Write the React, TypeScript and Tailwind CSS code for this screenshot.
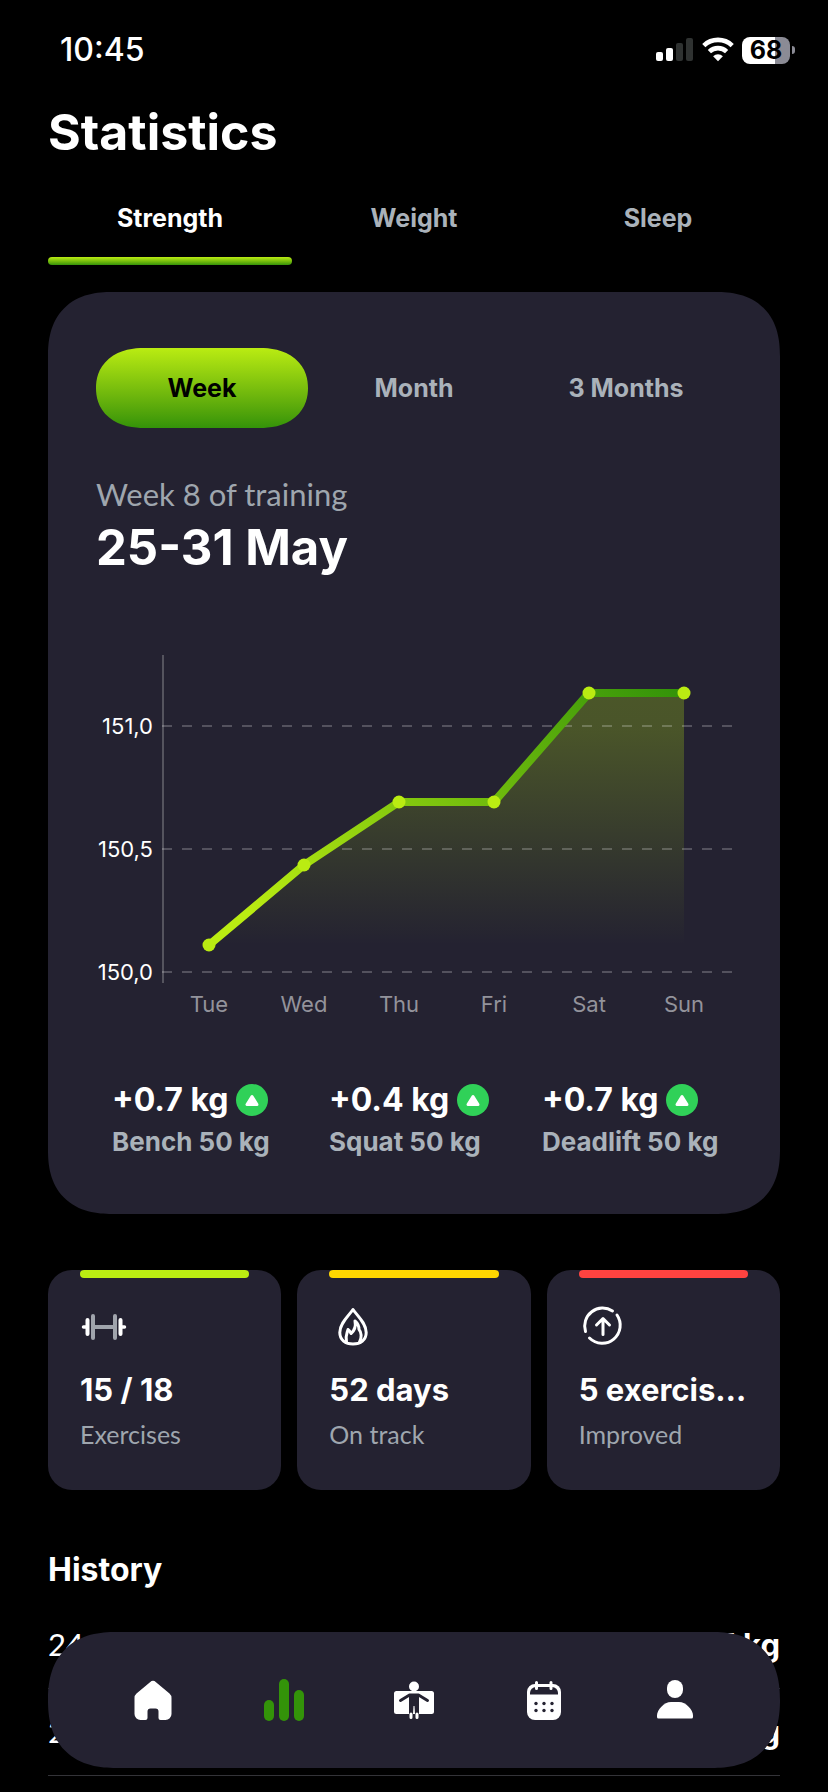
import React, { useState } from "react";

type Lift = { change: string; label: string };

const TABS = ["Strength", "Weight", "Sleep"];
const RANGES = ["Week", "Month", "3 Months"];

const LIFTS: Lift[] = [
  { change: "+0.7 kg", label: "Bench 50 kg" },
  { change: "+0.4 kg", label: "Squat 50 kg" },
  { change: "+0.7 kg", label: "Deadlift 50 kg" },
];

const HISTORY = [
  { date: "24 May", weight: "151 kg" },
  { date: "23 May", weight: "150 kg" },
];

const GRID = [
  { label: "151,0", y: 86 },
  { label: "150,5", y: 209 },
  { label: "150,0", y: 332 },
];

const POINTS = [
  { day: "Tue", x: 113, y: 305 },
  { day: "Wed", x: 208, y: 225 },
  { day: "Thu", x: 303, y: 162 },
  { day: "Fri", x: 398, y: 162 },
  { day: "Sat", x: 493, y: 53 },
  { day: "Sun", x: 588, y: 53 },
];

const StatusBar = () => (
  <div className="flex h-7 items-center justify-between pl-3">
    <span className="text-[32px] leading-7 font-medium">10:45</span>
    <div className="-mr-[15px] flex items-center gap-2">
      <svg width="38" height="28" viewBox="0 0 38 28" aria-hidden="true">
        <rect x="0" y="16" width="7" height="9" rx="2" fill="#fff" />
        <rect x="10" y="12" width="7" height="13" rx="2" fill="#fff" />
        <rect x="20" y="7" width="7" height="18" rx="2" fill="#2f3231" />
        <rect x="30" y="2" width="7" height="23" rx="2" fill="#2f3231" />
      </svg>
      <svg width="32" height="28" viewBox="0 0 32 28" aria-hidden="true">
        <g fill="none" stroke="#fff" strokeWidth="4.6">
          <path d="M1.8 9.6a20.5 20.5 0 0 1 28.4 0" />
          <path d="M7.4 15.6a12.5 12.5 0 0 1 17.2 0" />
        </g>
        <path d="M16 25.2l-4.9-5a7.2 7.2 0 0 1 9.8 0z" fill="#fff" />
      </svg>
      <div className="flex items-center gap-0.5">
        <div className="flex h-[27px] w-12 items-center justify-center rounded-lg bg-linear-to-r from-white from-68% to-[#8b8b95] to-68% text-[25px] leading-none font-bold text-black">
          68
        </div>
        <div className="h-2 w-[3px] rounded-r-full bg-[#8b8b95]" />
      </div>
    </div>
  </div>
);

const Chart = () => {
  const line = POINTS.map((p) => `${p.x},${p.y}`).join(" ");

  return (
    <svg
      viewBox="0 0 636 384"
      className="mt-16 w-full"
      fontSize="22"
      role="img"
      aria-label="Strength by day"
    >
      <defs>
        <linearGradient
          id="line"
          gradientUnits="userSpaceOnUse"
          x1="180"
          y1="305"
          x2="540"
          y2="0"
        >
          <stop offset="0" stopColor="#baec12" />
          <stop offset="1" stopColor="#339309" />
        </linearGradient>
        <linearGradient
          id="area"
          gradientUnits="userSpaceOnUse"
          x1="0"
          y1="53"
          x2="0"
          y2="305"
        >
          <stop offset="0" stopColor="#baec12" stopOpacity="0.26" />
          <stop offset="0.15" stopColor="#baec12" stopOpacity="0.25" />
          <stop offset="1" stopColor="#baec12" stopOpacity="0" />
        </linearGradient>
      </defs>
      <polygon points={`113,305 ${line} 588,305`} fill="url(#area)" />
      <path d="M67 15V343" stroke="#55545e" strokeWidth="2" />
      {GRID.map((g) => (
        <g key={g.label}>
          <path
            d={`M66 ${g.y}H636`}
            stroke="#fff"
            strokeOpacity="0.22"
            strokeWidth="2"
            strokeDasharray="10 10"
          />
          <text x="57" y={g.y + 8} textAnchor="end" fill="#fff">
            {g.label}
          </text>
        </g>
      ))}
      <polyline
        points={line}
        fill="none"
        stroke="url(#line)"
        strokeWidth="8"
        strokeLinejoin="round"
      />
      {POINTS.map((p) => (
        <g key={p.day}>
          <circle cx={p.x} cy={p.y} r="6.5" fill="#baec12" />
          <text x={p.x} y="372" textAnchor="middle" fill="#93939b">
            {p.day}
          </text>
        </g>
      ))}
    </svg>
  );
};

const StatCard = ({
  bar,
  icon,
  value,
  label,
}: {
  bar: string;
  icon: React.ReactNode;
  value: string;
  label: string;
}) => (
  <div className="min-w-0 rounded-3xl bg-[#242231] px-8 pb-10">
    <div className={`h-2 rounded-full ${bar}`} />
    <div className="mt-6 h-12 w-12">{icon}</div>
    <div className="mt-5 truncate text-[31px] leading-10 font-bold">
      {value}
    </div>
    <div className="mt-2 font-['Lato',sans-serif] text-[25px] leading-8 text-[#9fa6ae]">
      {label}
    </div>
  </div>
);

const DumbbellIcon = () => (
  <svg viewBox="0 0 48 48" strokeLinecap="round" fill="none">
    <path d="M14 25h20" stroke="#a0a4ac" strokeWidth="4" />
    <path d="M13 14v22M35 14v22" stroke="#a0a4ac" strokeWidth="4" />
    <path d="M7.5 18v14M40.5 18v14" stroke="#fff" strokeWidth="4" />
    <path d="M3.5 25H7M41 25h3.5" stroke="#fff" strokeWidth="3.5" />
  </svg>
);

const FlameIcon = () => (
  <svg
    viewBox="0 0 48 48"
    fill="none"
    stroke="#fff"
    strokeWidth="3"
    strokeLinejoin="round"
    strokeLinecap="round"
  >
    <path d="M24 7.5C20 13.5 10.8 21 10.8 30.5 10.8 38 16.5 42 24 42s13.2-4 13.2-11.5C37.2 21 28 13.500 24 7.500z" />
    <path d="M17.5 40c-1.5-6 .5-8.5 1.5-12.5 1.5 1 2.5 2.5 3 4 3.5-3 5-7.500 4-12.500 3.500 3 4 5.500 4 8.500 2.500 2.500 3 8.500.5 12.500" />
  </svg>
);

const ImprovedIcon = () => (
  <svg
    viewBox="0 0 48 48"
    fill="none"
    stroke="#fff"
    strokeWidth="3"
    strokeLinejoin="round"
    strokeLinecap="round"
  >
    <path d="M6.5 29.5A18 18 0 0 1 33.5 9" />
    <path d="M38 13A18 18 0 0 1 10.5 36" />
    <path d="M24 32.5V17M17.5 23l6.5-6.5 6.5 6.5" />
  </svg>
);

const HomeIcon = () => (
  <svg viewBox="0 0 48 48" className="h-12 w-12">
    <path
      d="M21 6.2a4.5 4.5 0 0 1 6 0L40.5 17.5a6 6 0 0 1 2 4.5V38a6 6 0 0 1-6 6h-5a2 2 0 0 1-2-2v-6.5a3 3 0 0 0-3-3h-5a3 3 0 0 0-3 3V42a2 2 0 0 1-2 2h-5a6 6 0 0 1-6-6V22a6 6 0 0 1 2-4.5z"
      fill="#fff"
    />
  </svg>
);

const BarsIcon = () => (
  <svg viewBox="0 0 48 48" className="h-12 w-12" fill="#339309">
    <rect x="4" y="24" width="10" height="21" rx="5" />
    <rect x="19" y="3" width="10" height="42" rx="5" />
    <rect x="34" y="14" width="10" height="31" rx="5" />
  </svg>
);

const BodyIcon = () => (
  <svg viewBox="0 0 48 48" className="h-12 w-12">
    <circle cx="24" cy="10.5" r="5" fill="#fff" />
    <rect x="4" y="15" width="40" height="23" rx="2.5" fill="#fff" />
    <path
      d="M10.5 24.5L19.5 19h9l9 5.5"
      fill="none"
      stroke="#242231"
      strokeWidth="3"
      strokeLinecap="round"
      strokeLinejoin="round"
    />
    <path d="M19 18h10v20H19z" fill="#242231" />
    <path
      d="M21 38v3.5M27 38v3.5"
      stroke="#fff"
      strokeWidth="3"
      strokeLinecap="round"
    />
    <path d="M23 38l.5-8h1l.5 8z" fill="#fff" />
  </svg>
);

const CalendarIcon = () => (
  <svg viewBox="0 0 48 48" className="h-12 w-12">
    <rect x="7" y="8" width="34" height="36" rx="8" fill="#fff" />
    <path
      d="M10 18.5V17a6 6 0 0 1 6-6h16a6 6 0 0 1 6 6v1.5z"
      fill="#242231"
    />
    <path
      d="M16.5 6.5v6M31 6.5v6"
      stroke="#fff"
      strokeWidth="3"
      strokeLinecap="round"
    />
    <g fill="#242231">
      <circle cx="16" cy="27.5" r="1.7" />
      <circle cx="24" cy="27.5" r="1.7" />
      <circle cx="32" cy="27.5" r="1.7" />
      <circle cx="16" cy="34.5" r="1.7" />
      <circle cx="24" cy="34.5" r="1.7" />
      <circle cx="32" cy="34.5" r="1.7" />
    </g>
  </svg>
);

const ProfileIcon = () => (
  <svg viewBox="0 0 48 48" className="h-12 w-12" fill="#fff">
    <rect x="16" y="4" width="16" height="18" rx="8" />
    <path d="M7.5 42.5a1.5 1.5 0 0 1-1.5-1.5v-1.5C6 34 13 26 20 26h8c7 0 14 8 14 13.5V41a1.5 1.5 0 0 1-1.5 1.5z" />
  </svg>
);

const NAV = [
  { label: "Home", icon: <HomeIcon /> },
  { label: "Statistics", icon: <BarsIcon /> },
  { label: "Body", icon: <BodyIcon /> },
  { label: "Calendar", icon: <CalendarIcon /> },
  { label: "Profile", icon: <ProfileIcon /> },
];

export default function App() {
  const [tab, setTab] = useState("Strength");
  const [range, setRange] = useState("Week");

  return (
    <div className="min-h-screen bg-black px-12 pt-9 font-['Inter','Liberation_Sans',sans-serif] text-white">
      <StatusBar />

      <h1 className="mt-10 text-[50px] leading-[56px] font-bold">
        Statistics
      </h1>

      <div className="mt-[42px] grid grid-cols-3">
        {TABS.map((t) => (
          <button
            key={t}
            onClick={() => setTab(t)}
            className={`text-[25px] leading-8 font-bold ${
              t === tab ? "text-white" : "text-[#aab2ba]"
            }`}
          >
            {t}
            <span
              className={`mt-[23px] block h-2 rounded-full ${
                t === tab ? "bg-linear-to-b from-[#baec12] to-[#339309]" : ""
              }`}
            />
          </button>
        ))}
      </div>

      <section className="mt-[27px] rounded-[52px] bg-[#242231] px-12 py-14 supports-[corner-shape:squircle]:rounded-[64px] supports-[corner-shape:squircle]:[corner-shape:superellipse(1.25)]">
        <div className="grid grid-cols-3">
          {RANGES.map((r) => (
            <button
              key={r}
              onClick={() => setRange(r)}
              className={`h-20 rounded-full text-[25px] leading-8 font-bold supports-[corner-shape:squircle]:rounded-[48px/40px] supports-[corner-shape:squircle]:[corner-shape:superellipse(1.15)] ${
                r === range
                  ? "bg-linear-to-b from-[#baec12] to-[#339309] text-black"
                  : "text-[#aab2ba]"
              }`}
            >
              {r}
            </button>
          ))}
        </div>

        <p className="mt-[46px] font-['Lato',sans-serif] text-[31px] leading-10 text-[#9fa6ae]">
          Week 8 of training
        </p>
        <h2 className="mt-1.5 text-[49px] leading-[56px] font-bold">
          25-31 May
        </h2>

        <Chart />

        <div className="mt-14 grid grid-cols-[217fr_213fr_190fr] pl-4">
          {LIFTS.map((l) => (
            <div key={l.label} className="whitespace-nowrap">
              <div className="flex items-center gap-2 text-[32px] leading-10 font-bold">
                {l.change}
                <svg width="32" height="32" viewBox="0 0 32 32" aria-label="up">
                  <circle cx="16" cy="16" r="16" fill="#30d158" />
                  <path
                    d="M16 12.5l-5 8h10z"
                    fill="#fff"
                    stroke="#fff"
                    strokeWidth="3"
                    strokeLinejoin="round"
                  />
                </svg>
              </div>
              <div className="mt-1.5 text-[26px] leading-8 font-bold text-[#aab2ba]">
                {l.label}
              </div>
            </div>
          ))}
        </div>
      </section>

      <div className="mt-14 grid grid-cols-3 gap-4">
        <StatCard
          bar="bg-[#baec12]"
          icon={<DumbbellIcon />}
          value="15 / 18"
          label="Exercises"
        />
        <StatCard
          bar="bg-[#ffd600]"
          icon={<FlameIcon />}
          value="52 days"
          label="On track"
        />
        <StatCard
          bar="bg-[#ff4340]"
          icon={<ImprovedIcon />}
          value="5 exercises"
          label="Improved"
        />
      </div>

      <h2 className="mt-[60px] text-[32px] leading-10 font-bold">History</h2>
      <ul className="mt-3">
        {HISTORY.map((h) => (
          <li
            key={h.date}
            className="flex items-baseline justify-between border-b border-[#333338] pt-[22px] pb-[23px] text-[31px] leading-10"
          >
            <span className="font-['Lato',sans-serif]">{h.date}</span>
            <span className="font-bold">{h.weight}</span>
          </li>
        ))}
      </ul>

      <nav className="fixed inset-x-12 bottom-6 grid h-[136px] grid-cols-5 items-center rounded-[56px] bg-[#242231] px-10 supports-[corner-shape:squircle]:rounded-[68px] supports-[corner-shape:squircle]:[corner-shape:superellipse(1.25)]">
        {NAV.map((n) => (
          <a
            key={n.label}
            href={`#${n.label.toLowerCase()}`}
            aria-label={n.label}
            className="flex justify-center"
          >
            {n.icon}
          </a>
        ))}
      </nav>
    </div>
  );
}
